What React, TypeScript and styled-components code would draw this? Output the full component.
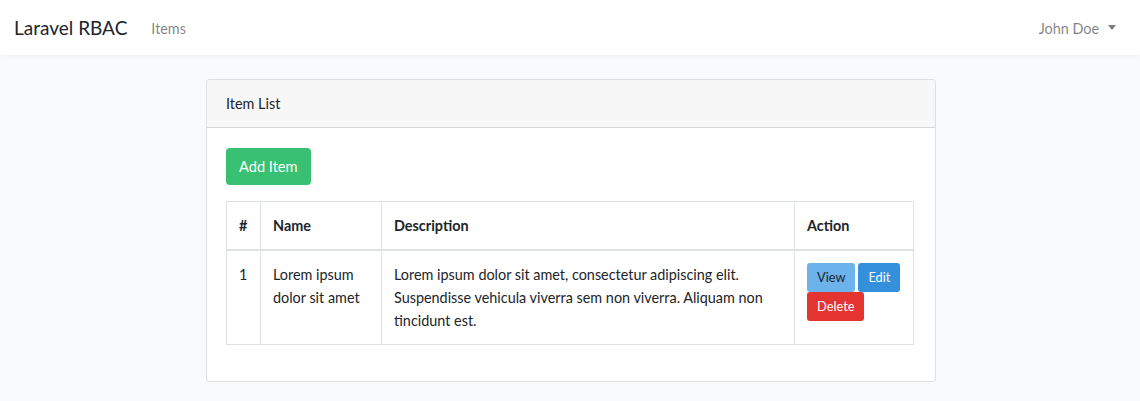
import React from "react";
import styled, { createGlobalStyle } from "styled-components";

const Global = createGlobalStyle`
  html, body { margin: 0; padding: 0; }
  body {
    background: #f8fafc;
    font-family: Lato, "Noto Sans", sans-serif;
    font-size: 14.4px;
    line-height: 1.6;
    color: #212529;
  }
  * { box-sizing: border-box; }
`;

const Navbar = styled.nav`
  height: 55px;
  background: #fff;
  box-shadow: 0 2px 4px rgba(0, 0, 0, 0.04);
  display: flex;
  align-items: center;
  padding: 2px 16px 0 14px;
`;

const Brand = styled.a`
  font-size: 19px;
  color: #212529;
  text-decoration: none;
  margin-right: 24px;
`;

const NavLink = styled.a`
  color: rgba(0, 0, 0, 0.5);
  font-size: 14.4px;
  text-decoration: none;
`;

const Spacer = styled.div`
  flex: 1;
`;

const UserMenu = styled.a`
  color: rgba(0, 0, 0, 0.5);
  display: flex;
  align-items: center;
  gap: 9px;
  margin-right: 8px;
`;

const Caret = styled.span`
  width: 0;
  height: 0;
  border-left: 4.5px solid transparent;
  border-right: 4.5px solid transparent;
  border-top: 5px solid rgba(0, 0, 0, 0.5);
  margin-top: -2px;
`;

const Main = styled.main`
  display: flex;
  justify-content: center;
  padding: 24px 0 20px;
`;

const Card = styled.div`
  width: 730px;
  background: #fff;
  border: 1px solid rgba(0, 0, 0, 0.125);
  border-radius: 4px;
  margin-left: 2px;
`;

const CardHeader = styled.div`
  background: #f7f7f7;
  border-bottom: 1px solid rgba(0, 0, 0, 0.125);
  padding: 12px 19px;
  border-radius: 4px 4px 0 0;
`;

const CardBody = styled.div`
  padding: 20px 21px 20px 19px;
`;

const Btn = styled.button<{ $variant: "success" | "info" | "primary" | "danger"; $small?: boolean }>`
  font-family: inherit;
  border: 1px solid transparent;
  border-radius: ${(p) => (p.$small ? "3px" : "4px")};
  padding: ${(p) => (p.$small ? "4px 9px" : "6px 12px")};
  font-size: ${(p) => (p.$small ? "12.8px" : "14.6px")};
  line-height: ${(p) => (p.$small ? "19px" : "23px")};
  cursor: pointer;
  background: ${(p) =>
    ({ success: "#38c172", info: "#6cb2eb", primary: "#3490dc", danger: "#e3342f" }[p.$variant])};
  color: ${(p) => (p.$variant === "info" ? "#212529" : "#fff")};
`;

const Table = styled.table`
  width: 100%;
  table-layout: fixed;
  margin-top: 16px;
  margin-bottom: 16px;
  border-collapse: collapse;
  border: 1px solid #dee2e6;
`;

const Th = styled.th<{ $w?: number }>`
  text-align: left;
  font-weight: 700;
  padding: 12px;
  border: 1px solid #dee2e6;
  border-bottom-width: 2px;
  vertical-align: bottom;
  width: ${(p) => (p.$w ? `${p.$w}px` : "auto")};
`;

const Td = styled.td`
  padding: 12px;
  border: 1px solid #dee2e6;
  vertical-align: top;
`;

const Actions = styled.div`
  display: flex;
  flex-wrap: wrap;
  gap: 0 3px;
  width: 96px;
`;

export default function App() {
  return (
    <>
      <Global />
      <Navbar>
        <Brand href="#">Laravel RBAC</Brand>
        <NavLink href="#">Items</NavLink>
        <Spacer />
        <UserMenu>
          John Doe <Caret />
        </UserMenu>
      </Navbar>
      <Main>
        <Card>
          <CardHeader>Item List</CardHeader>
          <CardBody>
            <Btn $variant="success">Add Item</Btn>
            <Table>
              <thead>
                <tr>
                  <Th $w={34}>#</Th>
                  <Th $w={121}>Name</Th>
                  <Th>Description</Th>
                  <Th $w={119}>Action</Th>
                </tr>
              </thead>
              <tbody>
                <tr>
                  <Td>1</Td>
                  <Td>Lorem ipsum dolor sit amet</Td>
                  <Td>
                    Lorem ipsum dolor sit amet, consectetur adipiscing elit. Suspendisse vehicula viverra sem non
                    viverra. Aliquam non tincidunt est.
                  </Td>
                  <Td>
                    <Actions>
                      <Btn $variant="info" $small>View</Btn>
                      <Btn $variant="primary" $small>Edit</Btn>
                      <Btn $variant="danger" $small>Delete</Btn>
                    </Actions>
                  </Td>
                </tr>
              </tbody>
            </Table>
          </CardBody>
        </Card>
      </Main>
    </>
  );
}
